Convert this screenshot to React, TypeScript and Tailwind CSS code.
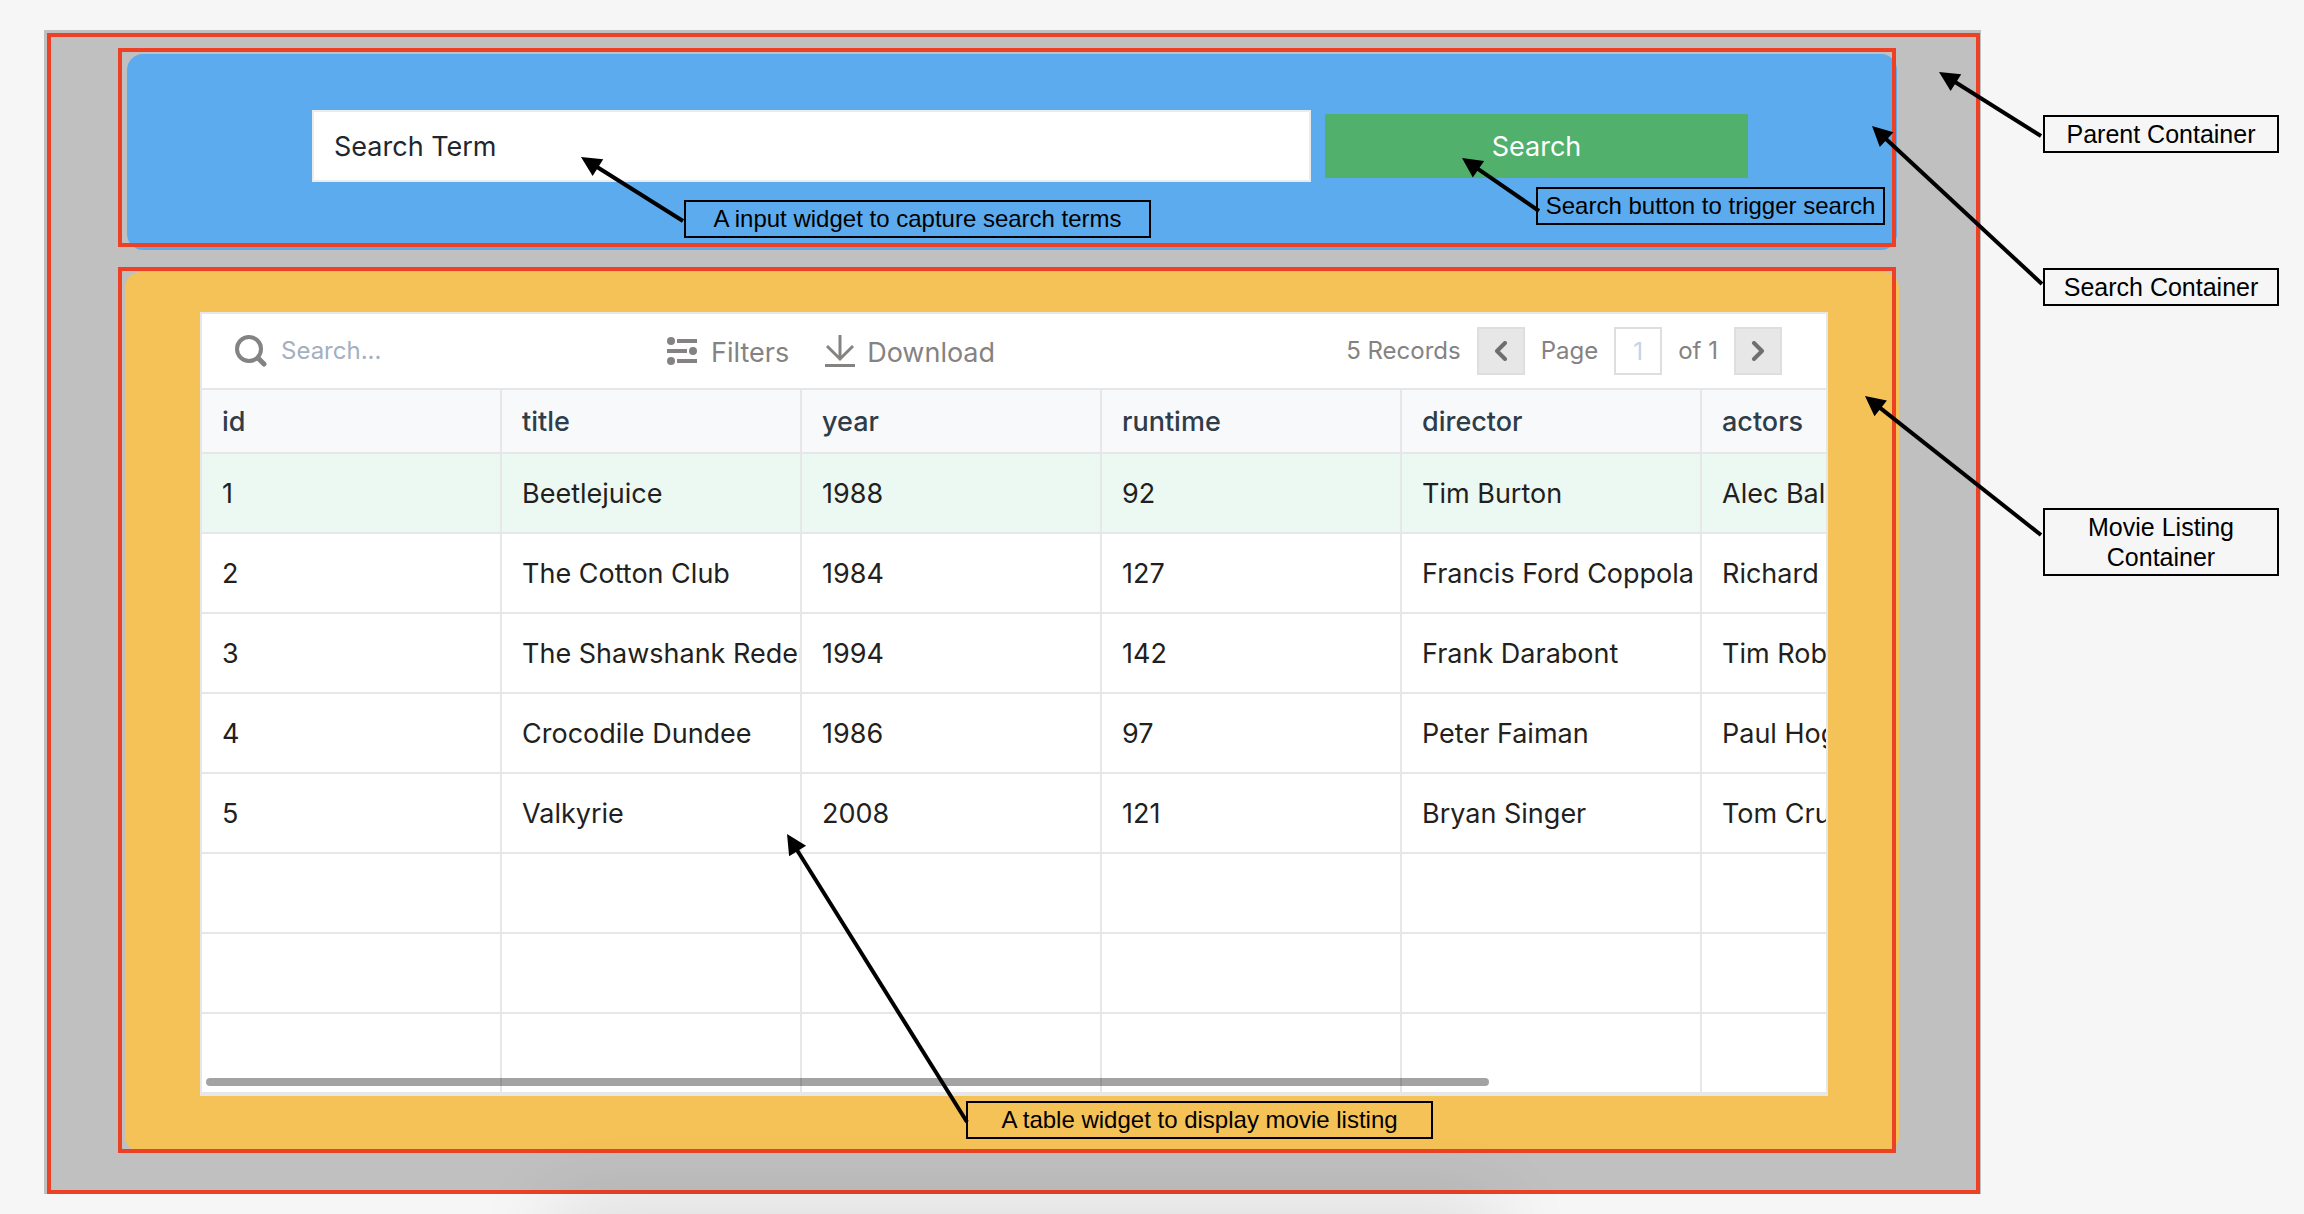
import type { ReactNode } from "react";

const columns = ["id", "title", "year", "runtime", "director", "actors"];

const movies = [
  ["1", "Beetlejuice", "1988", "92", "Tim Burton", "Alec Baldwin"],
  ["2", "The Cotton Club", "1984", "127", "Francis Ford Coppola", "Richard Gere"],
  ["3", "The Shawshank Redemption", "1994", "142", "Frank Darabont", "Tim Robbins"],
  ["4", "Crocodile Dundee", "1986", "97", "Peter Faiman", "Paul Hogan"],
  ["5", "Valkyrie", "2008", "121", "Bryan Singer", "Tom Cruise"],
  ["", "", "", "", "", ""],
  ["", "", "", "", "", ""],
  ["", "", "", "", "", ""],
];

function SearchIcon() {
  return (
    <svg className="h-8 w-8 shrink-0" viewBox="0 0 32 32" fill="none" stroke="#858282" aria-hidden="true">
      <circle cx="14" cy="14" r="12" strokeWidth="4" />
      <path d="M23 23l6 6" strokeWidth="5" strokeLinecap="round" />
    </svg>
  );
}

function FiltersIcon() {
  return (
    <svg className="h-7 w-[30px]" viewBox="0 0 30 28" fill="#858282" aria-hidden="true">
      <circle cx="4" cy="4" r="4" />
      <rect x="10" y="2" width="20" height="4" />
      <rect x="0" y="12" width="20" height="4" />
      <circle cx="26" cy="14" r="4" />
      <circle cx="4" cy="24" r="4" />
      <rect x="10" y="22" width="20" height="4" />
    </svg>
  );
}

function DownloadIcon() {
  return (
    <svg className="h-8 w-[30px]" viewBox="0 0 30 32" fill="none" stroke="#858282" strokeWidth="3" aria-hidden="true">
      <path d="M15 0v23M2 11l13 13L28 11" />
      <path d="M0 30.5h30" />
    </svg>
  );
}

function Chevron({ d }: { d: string }) {
  return (
    <svg className="h-5 w-4" viewBox="0 0 16 20" fill="none" stroke="#716e6e" strokeWidth="4" strokeLinecap="round" strokeLinejoin="round" aria-hidden="true">
      <path d={d} />
    </svg>
  );
}

/* Arrow whose head sits at (0, 0) of its box and whose tail ends at (dx, dy). */
function Arrow({ dx, dy, className }: { dx: number; dy: number; className: string }) {
  const angle = (Math.atan2(dy, dx) * 180) / Math.PI;
  const length = Math.hypot(dx, dy);
  return (
    <svg className={`pointer-events-none absolute z-20 overflow-visible ${className}`} width={dx} height={dy} aria-hidden="true">
      <g transform={`rotate(${angle})`}>
        <path d="M0 0L20 -10V10Z" />
        <path d={`M18 0H${length}`} stroke="#000" strokeWidth="4" />
      </g>
    </svg>
  );
}

function Note({ className, children }: { className: string; children: ReactNode }) {
  return (
    <p className={`absolute z-20 border-2 border-black py-[2px] text-center font-['Liberation_Sans',Arial,sans-serif] leading-[30px] whitespace-nowrap text-black ${className}`}>
      {children}
    </p>
  );
}

export default function App() {
  return (
    <div className="relative min-h-screen overflow-hidden bg-[#f6f6f6] pt-[30px] pr-[323px] pb-5 pl-11 font-[Inter,sans-serif]">
      <main className="relative bg-[#c0c0c0] pt-[3px] pr-px pl-[3px]">
        <div className="border-4 border-[#ec4125] pt-[17px] pr-[77px] pb-[38px] pl-[74px]">
          <section className="relative mr-[2px] ml-[2px] rounded-2xl bg-[#5cabee] pt-14 pr-[149px] pb-[68px] pl-[185px]">
            <form className="flex items-center gap-[14px]" onSubmit={(e) => e.preventDefault()}>
              <input
                aria-label="Search term"
                defaultValue="Search Term"
                className="h-[72px] min-w-0 flex-1 border-2 border-[#ebebeb] bg-white px-5 text-[27px] text-[#1f272e] outline-none"
              />
              <button type="submit" className="h-16 w-[423px] bg-[#50b06c] pt-[2px] text-[27px] text-white">
                Search
              </button>
            </form>
            <span className="pointer-events-none absolute -top-[6px] right-px bottom-[3px] -left-[9px] border-4 border-[#ec4125]" />
            <Arrow dx={102} dy={64} className="top-[103px] left-[454px]" />
            <Note className="top-[146px] left-[557px] w-[467px] text-2xl/[30px]">A input widget to capture search terms</Note>
            <Arrow dx={77} dy={53} className="top-[104px] right-[358px]" />
            <Note className="top-[133px] right-3 w-[349px] text-2xl/[30px]">Search button to trigger search</Note>
          </section>

          <section className="relative mt-[22px] rounded-2xl bg-[#f5c257] pt-10 pr-[71px] pb-14 pl-[75px]">
            <div className="relative overflow-hidden border-2 border-[#e7e7e7] bg-white">
              <div className="flex h-[76px] items-center border-b-2 border-[#e7e7e7] pr-11 pl-[33px] text-[#858282]">
                <label className="flex w-[432px] items-center gap-[14px]">
                  <SearchIcon />
                  <input
                    aria-label="Search table"
                    placeholder="Search..."
                    className="w-full min-w-0 bg-transparent text-2xl outline-none placeholder:text-[#a3b0bf]"
                  />
                </label>
                <button type="button" className="flex items-center gap-[14px] text-[27px]">
                  <FiltersIcon />
                  <span className="pt-1">Filters</span>
                </button>
                <button type="button" className="ml-9 flex items-center gap-3 text-[27px]">
                  <DownloadIcon />
                  <span className="pt-1">Download</span>
                </button>
                <div className="ml-auto flex items-center gap-4 text-2xl">
                  <span>5 Records</span>
                  <button type="button" aria-label="Previous page" className="flex size-12 items-center justify-center border-2 border-[#dedede] bg-[#e7e7e7]">
                    <Chevron d="M12 2L4 10l8 8" />
                  </button>
                  <span>Page</span>
                  <input
                    aria-label="Page number"
                    defaultValue="1"
                    className="size-12 border-2 border-[#dedede] bg-white text-center text-2xl text-[#c3d4e6] outline-none"
                  />
                  <span>of 1</span>
                  <button type="button" aria-label="Next page" className="flex size-12 items-center justify-center border-2 border-[#dedede] bg-[#e7e7e7]">
                    <Chevron d="M4 2l8 8-8 8" />
                  </button>
                </div>
              </div>

              <table className="w-[1800px] table-fixed border-separate border-spacing-0 text-left text-[27px] text-[#231f20]">
                <thead>
                  <tr className="h-16 bg-[#f8f9fb] text-[#2e3d49]">
                    {columns.map((name) => (
                      <th key={name} scope="col" className="w-[300px] border-r-2 border-b-2 border-[#e7e7e7] pt-[3px] pl-5 font-medium">
                        {name}
                      </th>
                    ))}
                  </tr>
                </thead>
                <tbody>
                  {movies.map((row, i) => (
                    <tr key={i} className="h-20 first:bg-[#ecf8f2]">
                      {row.map((cell, j) => (
                        <td key={j} className="overflow-hidden border-r-2 border-b-2 border-[#e7e7e7] pt-[3px] pl-5 whitespace-nowrap">
                          {cell}
                        </td>
                      ))}
                    </tr>
                  ))}
                </tbody>
              </table>
              <div className="absolute bottom-2 left-1 h-2 w-[79%] rounded-full bg-black/36" />
            </div>
            <span className="pointer-events-none absolute -top-[5px] right-[3px] -bottom-px -left-[7px] border-4 border-[#ec4125]" />
            <Arrow dx={180} dy={288} className="top-[562px] left-[662px]" />
            <Note className="bottom-[13px] left-[841px] w-[467px] text-2xl/[30px]">A table widget to display movie listing</Note>
          </section>
        </div>

        <Arrow dx={102} dy={64} className="top-[42px] -right-[60px]" />
        <Note className="top-[85px] left-full ml-[62px] w-[236px] text-[25px]">Parent Container</Note>
        <Arrow dx={170} dy={158} className="top-24 -right-[61px]" />
        <Note className="top-[238px] left-full ml-[62px] w-[236px] text-[25px]">Search Container</Note>
        <Arrow dx={176} dy={139} className="top-[366px] -right-[60px]" />
        <Note className="top-[478px] left-full ml-[62px] w-[236px] text-[25px]">
          Movie Listing
          <br />
          Container
        </Note>
      </main>
      <div className="pointer-events-none absolute top-full right-[35%] left-[24%] h-10 shadow-[0_0_80px_rgba(0,0,0,0.18)]" />
    </div>
  );
}
